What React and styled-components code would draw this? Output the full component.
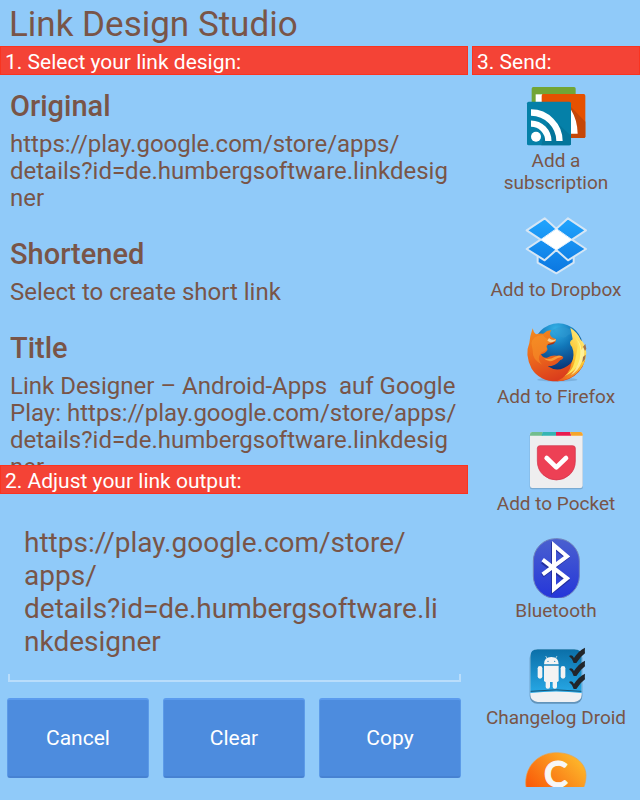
import React, { useState } from "react"
import styled, { createGlobalStyle } from "styled-components"

const GlobalStyle = createGlobalStyle`
  * {
    box-sizing: border-box;
  }

  body {
    margin: 0;
    background-color: #90caf9;
    color: #795548;
    font-family: Roboto, "Liberation Sans", sans-serif;
  }
`

const Page = styled.div`
  display: flex;
  flex-direction: column;
  height: 100vh;
`

const Title = styled.h1`
  margin: 0;
  padding: 4px 9px 0;
  font-size: 35px;
  font-weight: 400;
  line-height: 42px;
`

const Columns = styled.main`
  flex: 1;
  min-height: 0;
  display: grid;
  grid-template-columns: minmax(0, 1fr) 168px;
  gap: 4px;
`

const Column = styled.section`
  display: flex;
  flex-direction: column;
  min-width: 0;
  min-height: 0;
  padding-bottom: ${props => props.$bottom};
`

const Bar = styled.h2`
  flex: none;
  margin: 0;
  padding: 3px 4px 0;
  border: 1px solid #fa3420;
  background-color: #f44336;
  color: #fff;
  font-size: 21px;
  font-weight: 400;
  line-height: 24px;
`

const List = styled.ul`
  flex: 1;
  min-height: 0;
  margin: 0;
  padding: ${props => props.$top || "0"} 0 0;
  overflow: hidden;
  list-style-type: none;
`

const PlainButton = styled.button`
  display: block;
  width: 100%;
  border: 0;
  background: none;
  color: inherit;
  font-family: inherit;
  cursor: pointer;
`

const Design = styled(PlainButton)`
  padding: 11px 10px;
  text-align: left;
`

const DesignName = styled.span`
  display: block;
  margin-bottom: 5px;
  font-size: 29px;
  font-weight: 500;
  line-height: 40px;
`

const DesignText = styled.span`
  display: block;
  font-size: 24px;
  line-height: 27px;
  white-space: pre-wrap;
`

const Target = styled(PlainButton)`
  padding: 0 10px 19px;
  font-size: 19px;
  line-height: 22px;
  text-align: center;

  svg {
    display: block;
    width: 64px;
    height: 64px;
    margin: 0 auto 2px;
  }
`

const Output = styled.textarea`
  flex: none;
  display: block;
  margin: 0 7px 16px 8px;
  padding: 32px 16px 24px;
  border: 0;
  outline: 0;
  resize: none;
  overflow: hidden;
  background-color: transparent;
  background-image: linear-gradient(#b9ddfb, #b9ddfb),
    linear-gradient(#b9ddfb, #b9ddfb), linear-gradient(#b9ddfb, #b9ddfb);
  background-repeat: no-repeat;
  background-position: left bottom, left bottom, right bottom;
  background-size: 100% 2px, 2px 8px, 2px 8px;
  color: inherit;
  font-family: inherit;
  font-size: 28px;
  line-height: 33px;
`

const Actions = styled.div`
  flex: none;
  display: flex;
  gap: 14px;
  padding: 0 7px;
`

const Action = styled.button`
  flex: 1;
  height: 80px;
  border: 1px solid #5c9be8;
  border-top: 2px solid #5b9bee;
  border-bottom: 2px solid #4782d2;
  border-radius: 3px;
  background-color: #4d8cde;
  color: #fff;
  font-family: inherit;
  font-size: 21px;
  cursor: pointer;
`

const FeedIcon = () => (
  <svg viewBox="42 27 192 192">
    <rect x="65" y="36" width="132" height="100" rx="5" fill="#72a536" />
    <rect x="77" y="58" width="20" height="24" fill="#fff" />
    <rect x="95" y="57" width="131" height="132" rx="5" fill="#e65100" />
    <path d="M183 96l43 44v45q0 4-4 4h-39z" fill="#c54708" />
    <path d="M183 104q19 30 20 72h-20z" fill="#fff" />
    <rect x="51" y="80" width="132" height="131" rx="5" fill="#0580a8" />
    <path d="M118 122l65 60v24q0 5-5 5h-84z" fill="#04759a" />
    <g fill="none" stroke="#fff" strokeWidth="19">
      <path d="M63 112.500A86 86 0 0 1 148.500 198" />
      <path d="M63 146A52 52 0 0 1 115 198" />
    </g>
    <circle cx="78" cy="185" r="15" fill="#fff" />
  </svg>
)

const DropboxIcon = () => (
  <svg viewBox="42 24 192 192">
    <defs>
      <linearGradient id="box" x1="0" y1="38" x2="0" y2="205" gradientUnits="userSpaceOnUse">
        <stop offset="0" stopColor="#21a6ff" />
        <stop offset="1" stopColor="#0b76e0" />
      </linearGradient>
    </defs>
    <g stroke="#d5e6f5" strokeWidth="6" strokeLinejoin="round">
      <path fill="url(#box)" d="M83 150v23l56 32 52-32v-23l-52-16z" />
      <path
        fill="url(#box)"
        d="M104 40l35 31 35-31 54 36-42 28 42 28-54 34-35-31-35 31-54-34 42-28-42-28z"
      />
    </g>
    <path d="M139 72l47 32-47 31-47-31z" fill="#fff" />
    <path
      d="M139 71l-47 33M139 71l47 33M92 104l47 31M186 104l-47 31"
      stroke="#e4f1fd"
      strokeWidth="3"
    />
  </svg>
)

const FirefoxIcon = () => (
  <svg viewBox="42 15 192 192">
    <defs>
      <radialGradient id="globe" cx=".45" cy=".12" r=".85">
        <stop offset="0" stopColor="#35b2e8" />
        <stop offset=".45" stopColor="#1176b8" />
        <stop offset="1" stopColor="#0a2f70" />
      </radialGradient>
      <linearGradient id="fox" x1=".1" y1="0" x2=".5" y2="1">
        <stop offset="0" stopColor="#f28b1d" />
        <stop offset=".5" stopColor="#ec671c" />
        <stop offset="1" stopColor="#d93a1c" />
      </linearGradient>
      <linearGradient id="tail" x1=".8" y1="0" x2=".1" y2="1">
        <stop offset="0" stopColor="#fff08a" />
        <stop offset=".45" stopColor="#fbc42c" />
        <stop offset="1" stopColor="#e8591c" />
      </linearGradient>
    </defs>
    <ellipse cx="142" cy="194" rx="60" ry="6" fill="#5a87ae" opacity=".35" />
    <circle cx="145" cy="99" r="74" fill="url(#globe)" />
    <path d="M128 45q25-17 52-2 8 16-6 17-10 14-26 4-14-4-20-19z" fill="#2f97cf" opacity=".5" />
    <path
      d="M68 40q2 12 10 18 11-4 22-2 10-10 24-11-8 13 0 20 4 4 13 7 3 7-5 11l-17 5q-10 8-2 16-10 14-20 13 5 13 18 11 16-9 29-6 12-2 19 3 3 6-8 10-14 19-38 19 34 22 68-8 18-20 18-48 12 12 6 31 19-17 19-32 10 44-18 74-26 28-65 28-52 0-76-38-22-42-7-77 2-22 10-44z"
      fill="url(#fox)"
    />
    <path
      d="M181 38q23 15 31 36 15 12 17 40-2 36-29 61-26 24-60 24 38-17 44-53 12-27 2-50-13-15 2-23-3-19-7-35z"
      fill="url(#tail)"
    />
    <path d="M190 60q14 17 13 34-4 30-10 49-6 24-29 40 47-20 51-65 2-38-25-58z" fill="#ffe65c" />
    <path d="M201 74q14 14 12 31 6-4 8-13 6 28-6 50-9 25-32 39 28-34 28-64 2-26-10-43z" fill="#fff6ab" opacity=".8" />
    <path d="M219 95l7-8 3 14-4 7zM219 126l8-7-2 14-8 9z" fill="#a3744a" />
    <path d="M64 85q4-24 35-25 7 16 39 12-8 11-23 13-11 8-2 15-12 13-20 13-15 20 4 36-31-14-29-43z" fill="#f79629" opacity=".55" />
    <path d="M117 69q9 9 21 4-2 8-17 9l-9-5z" fill="#f6d29b" />
    <path d="M113 88l23-8-6 7-15 4z" fill="#a82f12" />
    <path d="M101 130q18 5 34-5 14-5 22 0-15 2-24 10-18 9-32-5z" fill="#f99c38" />
  </svg>
)

const PocketIcon = () => (
  <svg viewBox="42 21 192 192">
    <rect x="59" y="40" width="160" height="168" rx="7" fill="#6b94b8" opacity=".6" />
    <rect x="60" y="36" width="158" height="168" rx="7" fill="#eeeeef" />
    <path d="M67 36h31v11H60v-4q0-7 7-7z" fill="#72bd8d" />
    <path d="M98 36h40v11H95z" fill="#35b5b3" />
    <path d="M138 36h42l4 11h-46z" fill="#e91b4f" />
    <path d="M180 36h31q7 0 7 7v4h-34z" fill="#f5a52b" />
    <path
      d="M90 77h98q8 0 8 8v38q0 25-17 41-17 16-40 16t-40-16q-17-16-17-41V85q0-8 8-8z"
      fill="#ed4055"
      stroke="#cf3047"
      strokeWidth="2"
    />
    <path
      d="M110 114l29 28 29-28"
      fill="none"
      stroke="#fff"
      strokeWidth="14"
      strokeLinecap="round"
      strokeLinejoin="round"
    />
  </svg>
)

const BluetoothIcon = () => (
  <svg viewBox="42 12 192 192">
    <defs>
      <linearGradient id="tooth" x1="0" y1="0" x2="0" y2="1">
        <stop offset="0" stopColor="#4a60cf" />
        <stop offset="1" stopColor="#2536d9" />
      </linearGradient>
    </defs>
    <rect x="70" y="26" width="138" height="179" rx="67" fill="url(#tooth)" stroke="#6f83bd" strokeWidth="3" />
    <g fill="none" strokeWidth="12">
      <path d="M100 93l73 55-41 32V45l41 34-73 55" stroke="#2430a0" transform="translate(-3 3)" />
      <path d="M98 89l73 56-39 32V46l39 33-73 54" stroke="#fff" />
    </g>
  </svg>
)

const ChangelogIcon = () => (
  <svg viewBox="42 3 192 192">
    <defs>
      <linearGradient id="log" x1="0" y1="0" x2="0" y2="1">
        <stop offset="0" stopColor="#0b6fa8" />
        <stop offset="1" stopColor="#27a8e6" />
      </linearGradient>
    </defs>
    <rect x="59" y="31" width="158" height="160" rx="23" fill="#456f91" opacity=".6" />
    <rect x="61" y="28" width="154" height="158" rx="22" fill="#f0f1f3" />
    <path d="M83 28h110q22 0 22 22v109q-77-9-154 0V50q0-22 22-22z" fill="url(#log)" />
    <path d="M62 154q77-9 152 0" fill="none" stroke="#1b5576" strokeWidth="3" />
    <g fill="#f3f3f3">
      <path d="M102 73q0-22 22-22t22 22z" />
      <path d="M102 77h44v44q0 5-5 5h-34q-5 0-5-5z" />
      <rect x="83" y="78" width="14" height="38" rx="7" />
      <rect x="152" y="78" width="14" height="38" rx="7" />
      <rect x="107" y="112" width="13" height="34" rx="6" />
      <rect x="128" y="112" width="13" height="34" rx="6" />
    </g>
    <path d="M111 55l-4-7M137 55l4-7" stroke="#f3f3f3" strokeWidth="2" />
    <circle cx="114" cy="64" r="2" fill="#1682be" />
    <circle cx="134" cy="64" r="2" fill="#1682be" />
    <g fill="#22262b">
      <path d="M177 48q10-6 15 6 14-22 33-31-1 10 0 17-14 10-26 29h-8q-4-14-14-21z" />
      <path d="M177 87q10-6 15 6 14-22 33-31-1 10 0 17-14 10-26 29h-8q-4-14-14-21z" />
      <path d="M177 126q10-6 15 6 14-22 33-31-1 10 0 17-14 10-26 29h-8q-4-14-14-21z" />
    </g>
  </svg>
)

const Letter = styled.text`
  font-family: Lato, sans-serif;
  font-size: 108px;
  font-weight: 700;
  fill: #f7f7f7;
  stroke: #f7f7f7;
  stroke-width: 3px;
  stroke-linejoin: round;
`

const BubbleIcon = () => (
  <svg viewBox="42 24 192 192">
    <defs>
      <linearGradient id="bubble" x1=".9" y1="0" x2=".1" y2=".7">
        <stop offset="0" stopColor="#fdbf2d" />
        <stop offset=".5" stopColor="#fb8c1c" />
        <stop offset="1" stopColor="#fa5a08" />
      </linearGradient>
    </defs>
    <path
      d="M139 38c52 0 89 31 89 68 0 53-40 92-91 92-54 0-90-24-90-70 0-52 40-90 92-90z"
      fill="url(#bubble)"
      stroke="#e9a04a"
      strokeWidth="2"
    />
    <Letter x="138" y="142" textAnchor="middle">
      C
    </Letter>
  </svg>
)

const link = "https://play.google.com/store/apps/\ndetails?id=de.humbergsoftware.linkdesig\nner"

const designs = [
  { name: "Original", text: link },
  { name: "Shortened", text: "Select to create short link" },
  { name: "Title", text: `Link Designer – Android-Apps  auf Google\nPlay: ${link}` },
]

const targets = [
  { name: "Add a subscription", Icon: FeedIcon },
  { name: "Add to Dropbox", Icon: DropboxIcon },
  { name: "Add to Firefox", Icon: FirefoxIcon },
  { name: "Add to Pocket", Icon: PocketIcon },
  { name: "Bluetooth", Icon: BluetoothIcon },
  { name: "Changelog Droid", Icon: ChangelogIcon },
  { name: "", Icon: BubbleIcon },
]

const initialOutput =
  "https://play.google.com/store/\napps/\ndetails?id=de.humbergsoftware.li\nnkdesigner"

export default () => {
  const [output, setOutput] = useState(initialOutput)

  return (
    <Page>
      <GlobalStyle />
      <Title>Link Design Studio</Title>
      <Columns>
        <Column $bottom="22px">
          <Bar>1. Select your link design:</Bar>
          <List>
            {designs.map(({ name, text }) => (
              <li key={name}>
                <Design type="button" onClick={() => setOutput(text)}>
                  <DesignName>{name}</DesignName>
                  <DesignText>{text}</DesignText>
                </Design>
              </li>
            ))}
          </List>
          <Bar as="label" htmlFor="output">
            2. Adjust your link output:
          </Bar>
          <Output
            id="output"
            rows={4}
            spellCheck={false}
            value={output}
            onChange={e => setOutput(e.target.value)}
          />
          <Actions>
            <Action type="button" onClick={() => setOutput(initialOutput)}>
              Cancel
            </Action>
            <Action type="button" onClick={() => setOutput("")}>
              Clear
            </Action>
            <Action type="button" onClick={() => navigator.clipboard.writeText(output)}>
              Copy
            </Action>
          </Actions>
        </Column>
        <Column $bottom="13px">
          <Bar>3. Send:</Bar>
          <List $top="9px">
            {targets.map(({ name, Icon }) => (
              <li key={name}>
                <Target type="button">
                  <Icon />
                  {name}
                </Target>
              </li>
            ))}
          </List>
        </Column>
      </Columns>
    </Page>
  )
}
